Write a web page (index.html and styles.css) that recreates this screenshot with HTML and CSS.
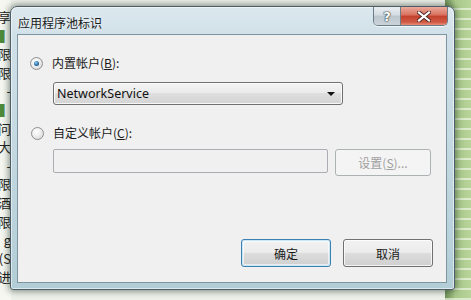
FILE: index.html
```html
<!DOCTYPE html>
<html lang="zh-CN">
<head>
<meta charset="utf-8">
<title>应用程序池标识</title>
<link rel="stylesheet" href="styles.css">
</head>
<body>
<div class="desktop">
  <div class="left-strip">
    <div class="frag t1"><span>共享</span></div>
    <div class="frag t2"><span>▌</span></div>
    <div class="frag t3"><span>局限</span></div>
    <div class="frag t4"><span>局限</span></div>
    <div class="frag t5"><span>-</span></div>
    <div class="frag t6"><span>▌</span></div>
    <div class="frag t7"><span>问</span></div>
    <div class="frag t8"><span>大</span></div>
    <div class="frag t9"><span>-</span></div>
    <div class="frag t10"><span>局限</span></div>
    <div class="frag t11"><span>酒</span></div>
    <div class="frag t12"><span>局限</span></div>
    <div class="frag t13"><span>g</span></div>
    <div class="frag t14"><span>(S</span></div>
    <div class="frag t15"><span>进</span></div>
  </div>
  <div class="mid"></div>
  <div class="right-strip"></div>
</div>

<div class="window">
  <div class="titlebar">
    <div class="title">应用程序池标识</div>
    <div class="caption-buttons">
      <div class="cap-btn help">?</div>
      <div class="cap-btn close">
        <svg width="14" height="11" viewBox="0 0 14 11">
          <path d="M2 1.5 L12 9.5 M12 1.5 L2 9.5" stroke="#4a2a26" stroke-width="4" stroke-linecap="square"/>
          <path d="M2 1.5 L12 9.5 M12 1.5 L2 9.5" stroke="#ffffff" stroke-width="2.2" stroke-linecap="square"/>
        </svg>
      </div>
    </div>
  </div>
  <div class="client">
    <div class="radio-row">
      <span class="radio checked"><span class="dot"></span></span>
      <span class="label">内置帐户(<u>B</u>):</span>
    </div>
    <div class="combo">
      <span class="combo-text">NetworkService</span>
      <span class="combo-arrow"></span>
    </div>
    <div class="radio-row second">
      <span class="radio"></span>
      <span class="label">自定义帐户(<u>C</u>):</span>
    </div>
    <div class="custom-row">
      <div class="textbox"></div>
      <div class="btn disabled">设置(<u>S</u>)...</div>
    </div>
    <div class="footer">
      <div class="btn default">确定</div>
      <div class="btn">取消</div>
    </div>
  </div>
</div>
</body>
</html>
```
FILE: styles.css
```css
html, body {
  margin: 0;
  padding: 0;
}
body {
  width: 471px;
  height: 300px;
  overflow: hidden;
  position: relative;
  font-family: "Noto Sans", "Noto Sans CJK SC", sans-serif;
  font-size: 12px;
  color: #1a1a1a;
}
.desktop {
  display: flex;
  height: 300px;
}
.left-strip {
  width: 11px;
  background: #f5f7f0;
  position: relative;
  overflow: hidden;
  font-family: "Noto Sans CJK SC", sans-serif;
  font-size: 13px;
  display: flex;
  flex-direction: column;
}
.frag {
  height: 18.6px;
  display: flex;
  justify-content: flex-end;
  white-space: nowrap;
  line-height: 18px;
  color: #222;
}
.frag.t1 { margin-top: 8px; }
.frag.t2 span, .frag.t6 span { color: #4f8a3a; }
.mid {
  flex: 1;
  background: #eef1ea;
}
.right-strip {
  width: 26px;
  background:
    repeating-linear-gradient(180deg, rgba(255,255,255,0) 0px, rgba(255,255,255,0) 8px, rgba(235,245,225,0.7) 8px, rgba(235,245,225,0.7) 10px),
    linear-gradient(90deg, #6f8f58 0%, #a9c98a 40%, #b8d49a 100%);
}

.window {
  position: absolute;
  left: 10px;
  top: 6px;
  width: 445px;
  height: 284px;
  box-sizing: border-box;
  border: 1px solid #4d5e68;
  border-radius: 7px 7px 3px 3px;
  background: linear-gradient(180deg, #dce8ee 0%, #d0e0e8 30px, #c0d6df 60%, #b2cdd6 100%);
  box-shadow: 0 0 7px 1px rgba(20, 40, 30, 0.55), inset 0 0 0 1px rgba(255,255,255,0.55);
  display: flex;
  flex-direction: column;
}
.titlebar {
  height: 27px;
  display: flex;
  justify-content: space-between;
  align-items: flex-start;
  padding: 0 6px 0 7px;
}
.title {
  font-family: "Noto Sans CJK SC", sans-serif;
  font-size: 12px;
  color: #1a1a1a;
  padding-top: 9px;
  line-height: 14px;
  text-shadow: 0 0 6px rgba(255,255,255,0.9);
}
.caption-buttons {
  display: flex;
  margin-top: 0;
  border: 1px solid #6a7c86;
  border-top: none;
  border-radius: 0 0 5px 5px;
  overflow: hidden;
  box-shadow: 0 1px 0 rgba(255,255,255,0.7);
}
.cap-btn {
  height: 18px;
  display: flex;
  align-items: center;
  justify-content: center;
}
.help {
  width: 26px;
  background: linear-gradient(180deg, #e9eef1 0%, #d5dde2 45%, #bcc7cd 50%, #c9d3d8 100%);
  border-right: 1px solid #6a7c86;
  font-family: "DejaVu Sans", sans-serif;
  font-weight: bold;
  font-size: 13px;
  color: #fff;
  text-shadow: 0 0 1px #34414a, 0 0 1px #34414a, 0 0 2px #34414a;
}
.close {
  width: 46px;
  background: linear-gradient(180deg, #eaa99b 0%, #d9705e 45%, #c2402c 50%, #d15b45 85%, #e8907c 100%);
}

.client {
  flex: 1;
  margin: 0 7px 6px 6px;
  border: 1px solid #7d94a1;
  background: #f0f0f0;
  display: flex;
  flex-direction: column;
  padding: 21px 13px 15px 12px;
  font-family: "Noto Sans CJK SC", sans-serif;
}
.radio-row {
  display: flex;
  align-items: center;
  height: 14px;
  gap: 9px;
}
.radio-row.second {
  margin-top: 21px;
  padding-left: 1px;
}
.label {
  font-size: 12px;
  line-height: 14px;
  color: #1a1a1a;
}
.label u, .btn u {
  text-decoration: underline;
  text-underline-offset: 1px;
}
.radio {
  width: 13px;
  height: 13px;
  box-sizing: border-box;
  border-radius: 50%;
  border: 1px solid #8e8f8f;
  background: radial-gradient(circle at 40% 35%, #ffffff 0%, #f0f0f0 40%, #cfd1d3 100%);
  display: flex;
  align-items: center;
  justify-content: center;
}
.radio .dot {
  width: 5px;
  height: 5px;
  border-radius: 50%;
  background: radial-gradient(circle at 40% 35%, #8fd0f5 0%, #2a6fa5 55%, #0f3f6c 100%);
}
.combo {
  margin: 12px 0 0 23px;
  width: 290px;
  height: 23px;
  box-sizing: border-box;
  border: 1px solid #707070;
  border-radius: 3px;
  background: linear-gradient(180deg, #f3f3f3 0%, #ebebeb 48%, #dedede 50%, #d4d4d4 100%);
  display: flex;
  align-items: center;
  justify-content: space-between;
  padding: 0 7px 0 3px;
  box-shadow: inset 0 0 0 1px rgba(255,255,255,0.8);
}
.combo-text {
  font-family: "Noto Sans", sans-serif;
  font-size: 12.5px;
  color: #111;
  line-height: 16px;
}
.combo-arrow {
  width: 0;
  height: 0;
  border-left: 4px solid transparent;
  border-right: 4px solid transparent;
  border-top: 4px solid #111;
  margin-top: 1px;
}
.custom-row {
  display: flex;
  align-items: flex-start;
  gap: 7px;
  margin: 9px 0 0 23px;
}
.textbox {
  width: 275px;
  height: 24px;
  box-sizing: border-box;
  border: 1px solid #abadb3;
  border-radius: 2px;
  background: #f0f0f0;
}
.btn {
  height: 28px;
  width: 90px;
  box-sizing: border-box;
  border: 1px solid #707070;
  border-radius: 3px;
  background: linear-gradient(180deg, #f2f2f2 0%, #ebebeb 48%, #dddddd 50%, #cfcfcf 100%);
  box-shadow: inset 0 0 0 1px rgba(255,255,255,0.75);
  display: flex;
  align-items: center;
  justify-content: center;
  font-family: "Noto Sans CJK SC", sans-serif;
  font-size: 12px;
  color: #1a1a1a;
}
.btn.disabled {
  width: 96px;
  height: 27px;
  border-color: #adb2b5;
  background: #f4f4f4;
  color: #a0a0a0;
  box-shadow: none;
}
.btn.default {
  border-color: #3c7fb1;
  background: linear-gradient(180deg, #f2f2f2 0%, #ebebeb 48%, #dddddd 50%, #cfcfcf 100%);
  box-shadow: inset 0 0 0 1px #c8e6f7, inset 0 0 0 2px rgba(255,255,255,0.6);
}
.footer {
  margin-top: auto;
  display: flex;
  justify-content: flex-end;
  gap: 12px;
}
```
